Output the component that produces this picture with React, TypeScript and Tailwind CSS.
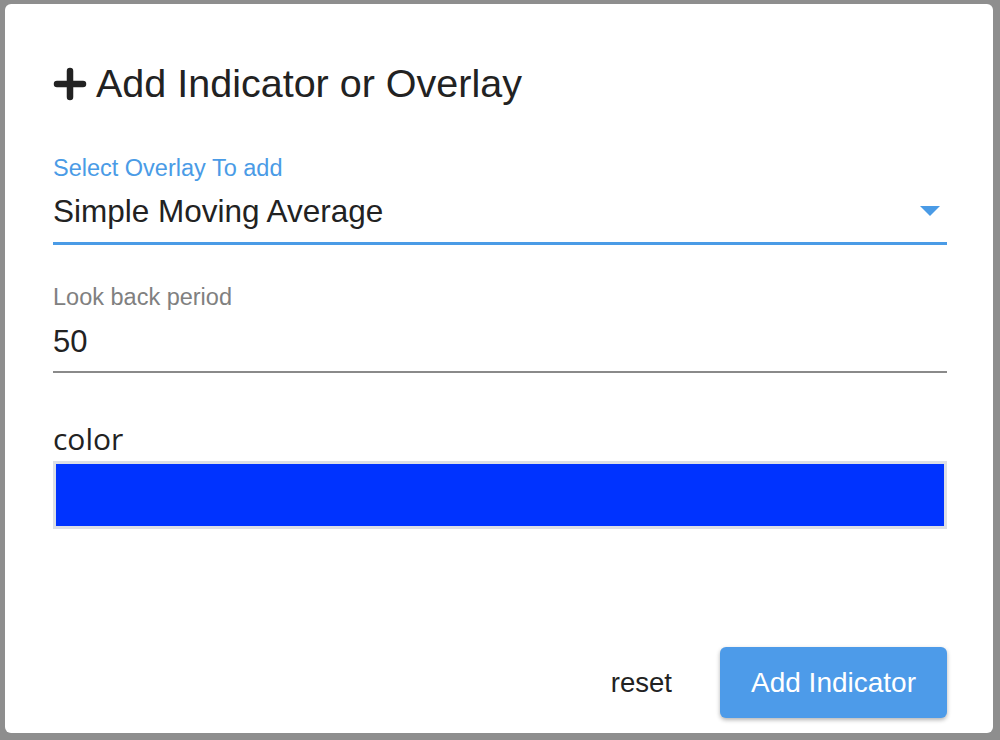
import React, { useState } from "react";

function PlusIcon() {
  return (
    <svg width="34" height="34" viewBox="0 0 34 34" className="shrink-0">
      <path d="M17 4 V30 M4 17 H30" stroke="#222" strokeWidth="6.5" strokeLinecap="round" />
    </svg>
  );
}

export default function App() {
  const [overlay] = useState("Simple Moving Average");
  const [period, setPeriod] = useState("50");

  return (
    <div className="h-[740px] w-[1000px] bg-[#8e8e8e] pt-[4px] pl-[5px] pr-[7px] pb-[7px] font-['Liberation_Sans',Arial,sans-serif]">
      <div className="h-full w-full bg-white rounded-[6px] pl-[48px] pr-[46px] flex flex-col">
        <div className="flex items-center gap-[9px] mt-[58px] h-[44px]">
          <PlusIcon />
          <h1 className="text-[39.5px] text-[#222] leading-none">Add Indicator or Overlay</h1>
        </div>

        <div className="mt-[48px]">
          <label className="block text-[23.5px] leading-[28px] text-[#4a9be6]">Select Overlay To add</label>
          <div className="flex items-center justify-between h-[63px] border-b-[3px] border-[#4a9be6]">
            <span className="text-[31.5px] text-[#222] leading-none">{overlay}</span>
            <svg width="20" height="10" viewBox="0 0 20 10" className="mr-[7px] mb-[3px]">
              <path d="M0 0 H20 L10 10 Z" fill="#4a9be6" />
            </svg>
          </div>
        </div>

        <div className="mt-[38px]">
          <label className="block text-[23.5px] leading-[28px] text-[#808080]">Look back period</label>
          <input
            value={period}
            onChange={(e) => setPeriod(e.target.value)}
            className="block w-full h-[62px] pt-[2px] text-[31px] text-[#222] border-b-[2px] border-[#8a8a8a] outline-none bg-transparent"
          />
        </div>

        <div className="mt-[49px]">
          <div className="text-[30px] leading-[34px] text-[#222] font-['Open_Sans',sans-serif]">color</div>
          <div className="mt-[5px] h-[68px] border-[3px] border-[#dcdfe6] bg-[#0033ff]" />
        </div>

        <div className="mt-auto mb-[15px] flex items-center justify-end gap-[48px]">
          <button className="text-[27.5px] text-[#222]">reset</button>
          <button className="w-[227px] h-[71px] rounded-[6px] bg-[#4d9be9] text-white text-[28px] shadow-[0_2px_4px_rgba(0,0,0,0.3)]">
            Add Indicator
          </button>
        </div>
      </div>
    </div>
  );
}
